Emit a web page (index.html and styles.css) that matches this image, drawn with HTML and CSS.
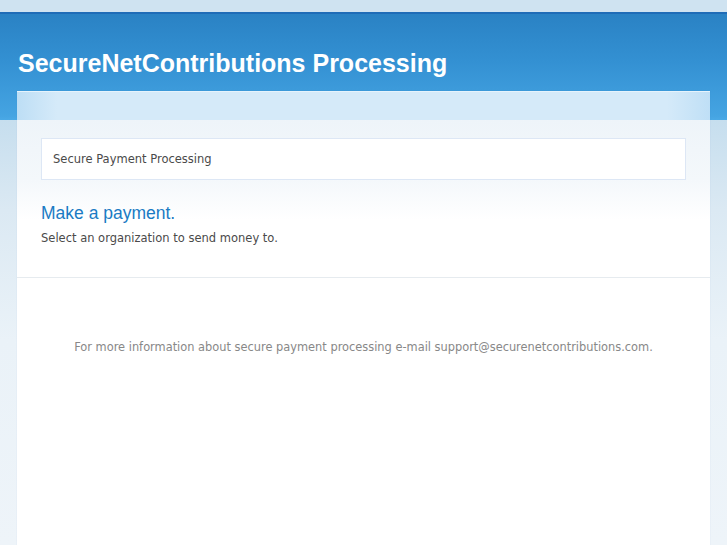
FILE: index.html
```html
<!DOCTYPE html>
<html>
<head>
<meta charset="utf-8">
<link rel="stylesheet" href="styles.css">
</head>
<body>
<div class="topband"></div>
<div class="page">
  <h1 class="title">SecureNetContributions Processing</h1>
  <div class="card">
    <div class="card-strip"></div>
    <div class="card-body">
      <div class="crumb">Secure Payment Processing</div>
      <h2 class="heading">Make a payment.</h2>
      <p class="lead">Select an organization to send money to.</p>
    </div>
    <div class="card-footer">
      <p class="info">For more information about secure payment processing e-mail support@securenetcontributions.com.</p>
    </div>
  </div>
</div>
</body>
</html>
```

FILE: styles.css
```css
html, body {
  margin: 0;
  padding: 0;
  height: 100%;
}
body {
  font-family: "DejaVu Sans", Verdana, sans-serif;
  background:
    linear-gradient(to bottom,
      #2a82c4 14px, #3390d2 60px, #45a4e2 116px, #4aa9e6 120px,
      #c6deee 120px, #dbe9f3 210px, #eaf2f8 340px, #eef4f9 545px);
  overflow: hidden;
}
.topband {
  height: 12px;
  background: #cfe3f1;
  border-bottom: 2px solid #1f6cb7;
}
.page {
  padding: 0 17px;
  width: 693px;
}
.title {
  margin: 0;
  padding: 34px 0 0 1px;
  height: 43px;
  font-family: "Liberation Sans", Arial, sans-serif;
  font-weight: bold;
  font-size: 25px;
  line-height: 31px;
  color: #fff;
}
.card {
  background: #fff;
  min-height: 460px;
  box-shadow: 0 0 1px rgba(40,110,180,0.15);
}
.card-strip {
  height: 28px;
  border-top: 1px solid #e6f3fc;
  background:
    linear-gradient(to right, #bddef5 0px, #d5eaf9 40px, #d5eaf9 650px, #bfdff6 693px);
}
.card-body {
  padding: 18px 24px 31px;
  border-bottom: 1px solid #e6ebef;
  background: linear-gradient(to bottom, #eef4f9 0px, #f4f8fb 60px, #ffffff 100px);
}
.crumb {
  height: 40px;
  background: #fff;
  border: 1px solid #dde7f5;
  padding-left: 11px;
  font-size: 11.5px;
  line-height: 40px;
  color: #4a4a4a;
}
.heading {
  margin: 22px 0 0;
  font-family: "Liberation Sans", Arial, sans-serif;
  font-weight: normal;
  font-size: 17.5px;
  line-height: 22px;
  color: #1a7bc4;
}
.lead {
  margin: 6px 0 0;
  font-size: 11.5px;
  line-height: 16px;
  color: #4a4a4a;
}
.card-footer {
  padding: 61px 0;
}
.info {
  margin: 0;
  text-align: center;
  font-size: 11.4px;
  line-height: 16px;
  color: #888;
}
```
